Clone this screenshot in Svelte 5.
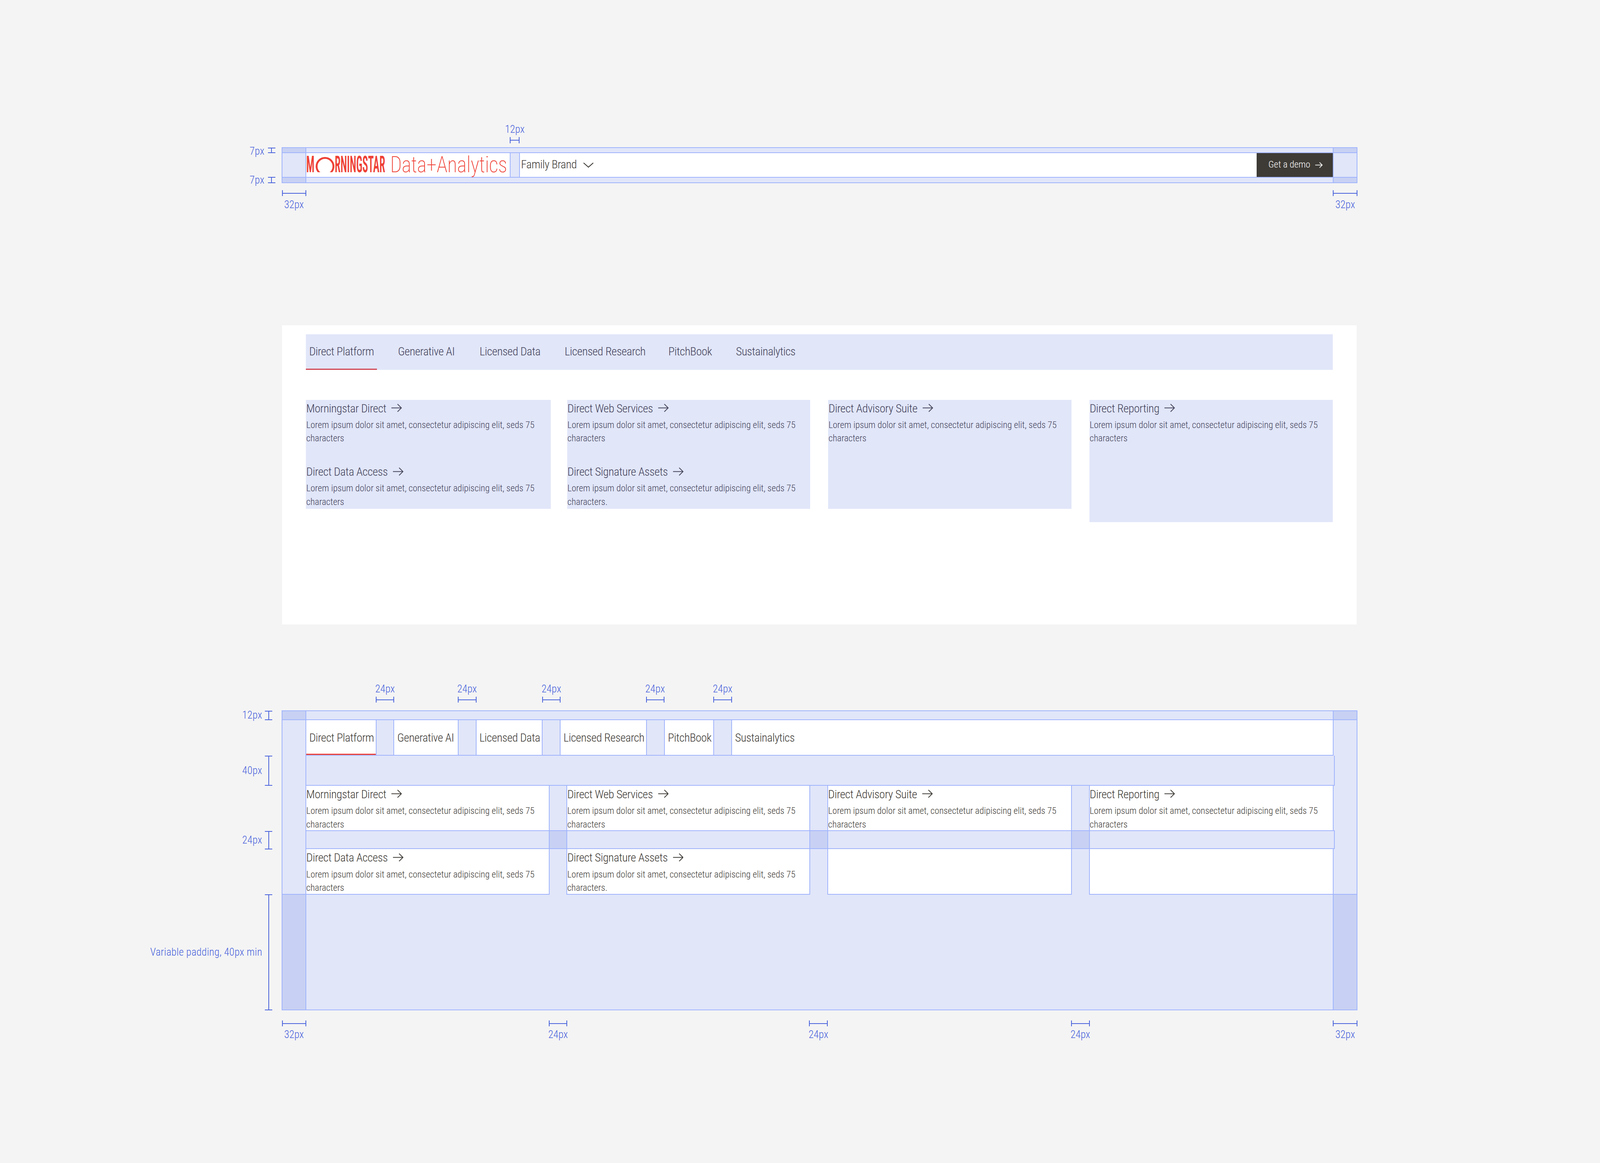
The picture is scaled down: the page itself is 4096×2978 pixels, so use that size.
<script>
  const tabs = [
    { label: 'Direct Platform', pw: 95, sw: 93, active: true },
    { label: 'Generative AI', pw: 85.5, sw: 85 },
    { label: 'Licensed Data', pw: 90, sw: 87.75 },
    { label: 'Licensed Research', pw: 115, sw: 115 },
    { label: 'PitchBook', pw: 66.5, sw: 65 },
    { label: 'Sustainalytics', pw: 90, sw: 90 }
  ];
  const lorem = 'Lorem ipsum dolor sit amet, consectetur adipiscing elit, seds 75 characters';
  const columns = [
    [{ t: 'Morningstar Direct', d: lorem }, { t: 'Direct Data Access', d: lorem }],
    [{ t: 'Direct Web Services', d: lorem }, { t: 'Direct Signature Assets', d: lorem + '.' }],
    [{ t: 'Direct Advisory Suite', d: lorem }],
    [{ t: 'Direct Reporting', d: lorem }]
  ];
  // Redline annotations, measured in reference pixels (2 per design px)
  const hbars = [
    [1367, 1393, 368], [755.5, 821, 510], [3573, 3639, 510],
    [1007, 1057, 1868], [1227, 1277, 1868], [1453, 1503, 1868], [1732, 1781, 1868], [1912, 1962, 1868],
    [755.5, 821, 2736], [1471, 1520.5, 2736], [2169, 2219, 2736], [2871, 2921, 2736], [3573, 3639, 2736]
  ];
  const vbars = [
    [718, 396, 410], [718, 474, 491],
    [710, 1906, 1931], [710, 2026, 2107], [710, 2228, 2277], [710, 2398, 2709]
  ];
  const centered = [
    ['12px', 1380, 347], ['32px', 788, 549], ['32px', 3606, 549],
    ['24px', 1032, 1847], ['24px', 1252, 1847], ['24px', 1478, 1847], ['24px', 1756, 1847], ['24px', 1937, 1847],
    ['32px', 788, 2774], ['24px', 1496, 2774], ['24px', 2194, 2774], ['24px', 2896, 2774], ['32px', 3606, 2774]
  ];
  const righted = [
    ['7px', 709, 405], ['7px', 709, 483],
    ['12px', 703, 1917], ['40px', 703, 2066], ['24px', 703, 2252], ['Variable padding, 40px min', 703, 2553]
  ];
</script>

{#snippet arrow(cls)}
  <svg class={cls} viewBox="0 0 14 11" aria-hidden="true"><path d="M0 5.5H13.4M8.2 0.4 13.4 5.5 8.2 10.6" /></svg>
{/snippet}

{#snippet item(it)}
  <div class="item">
    <div class="title">{it.t}{@render arrow('arrow')}</div>
    <p class="desc">{it.d}</p>
  </div>
{/snippet}

<div class="canvas">
  <section class="frame header-frame">
    <div class="corner bb br"></div><div class="band bb"></div><div class="corner bb bl"></div>
    <div class="band br"></div>
    <div class="header-row">
      <div class="logo">
        <span class="ms ms-m">M</span>
        <svg class="ms-o" viewBox="0 0 50 41" aria-hidden="true"><circle cx="25" cy="25" r="22.5" /></svg>
        <span class="ms ms-rest">RNINGSTAR</span>
        <span class="da">Data+Analytics</span>
      </div>
      <div class="gutter"></div>
      <div class="brand">
        <span>Family Brand</span>
        <svg class="chev" viewBox="0 0 14 7" aria-hidden="true"><path d="M.5.5 7 6.3 13.5.5" /></svg>
      </div>
      <div class="demo"><span>Get a demo</span>{@render arrow('demo-arrow')}</div>
    </div>
    <div class="band bl"></div>
    <div class="corner bt br"></div><div class="band bt"></div><div class="corner bt bl"></div>
  </section>

  <section class="panel">
    <div class="panel-tabs">
      {#each tabs as t}
        <div class="tab" class:active={t.active} style="width:{t.pw}px">{t.label}</div>
      {/each}
    </div>
    <div class="panel-cards">
      {#each columns as col, i}
        <div class="card card-{i}">
          {#each col as it}{@render item(it)}{/each}
        </div>
      {/each}
    </div>
  </section>

  <section class="frame spec-frame">
    <div class="corner bb br"></div><div class="band bb"></div><div class="corner bb bl"></div>
    <div class="band br"></div>
    <div class="spec">
      <div class="spec-tabs">
        {#each tabs as t, i}
          {#if i > 0}<div class="gutter"></div>{/if}
          <div class="tab" class:active={t.active} style="width:{t.sw}px">{t.label}</div>
        {/each}
      </div>
      <div class="gap40"></div>
      <div class="cols row-a">
        {#each columns as col, i}
          {#if i > 0}<div class="gutter"></div>{/if}
          <div>{@render item(col[0])}</div>
        {/each}
      </div>
      <div class="cols gap24">
        <div></div><div class="gutter dark"></div><div></div><div class="gutter dark"></div><div></div><div class="gutter dark"></div><div></div>
      </div>
      <div class="cols row-b">
        {#each columns as col, i}
          {#if i > 0}<div class="gutter"></div>{/if}
          <div>{#if col[1]}{@render item(col[1])}{/if}</div>
        {/each}
      </div>
    </div>
    <div class="band bl"></div>
    <div class="corner bt br"></div><div class="band bt"></div><div class="corner bt bl"></div>
  </section>

  {#each hbars as [a, b, y]}
    <div class="hbar" style="left:{a / 2}px;width:{(b - a) / 2}px;top:{y / 2}px"></div>
  {/each}
  {#each vbars as [x, a, b]}
    <div class="vbar" style="left:{x / 2}px;top:{a / 2}px;height:{(b - a) / 2}px"></div>
  {/each}
  {#each centered as [t, x, y]}
    <span class="note center" style="left:{x / 2}px;top:{y / 2}px">{t}</span>
  {/each}
  {#each righted as [t, x, y]}
    <span class="note right" style="left:{x / 2}px;top:{y / 2}px">{t}</span>
  {/each}
</div>

<style>
  :global(body) { margin: 0; background: #f4f4f4; overflow: hidden; }

  .canvas {
    zoom: 1.91;
    position: relative;
    box-sizing: border-box;
    width: 2144px;
    height: 1559px;
    padding: 197.5px 0 0 377.5px;
    font-family: Roboto, "Liberation Sans", sans-serif;
    font-stretch: 75%;
    font-weight: 300;
    color: #3e3b36;
  }

  .frame {
    display: grid;
    width: 1442px;
    grid-template-columns: 33px 1fr 33.35px;
    background: #e1e6f9;
    outline: 1.05px solid #a0b4fc;
    outline-offset: -1.05px;
  }
  .corner { background: #c8d1f3; }
  .bb { border-bottom: 1.05px solid #a0b4fc; }
  .bt { border-top: 1.05px solid #a0b4fc; }
  .br { border-right: 1.05px solid #a0b4fc; }
  .bl { border-left: 1.05px solid #a0b4fc; }
  .gutter {
    box-sizing: border-box;
    background: #e1e6f9;
    border-left: 1.05px solid #a0b4fc;
    border-right: 1.05px solid #a0b4fc;
  }
  .gutter.dark { background: #c8d1f3; }

  /* header */
  .header-frame { height: 48px; grid-template-rows: 7.6px 32.25px 8.15px; }
  .header-row { display: flex; background: #fff; min-width: 0; }
  .logo { flex: none; width: 272.85px; height: 32.25px; position: relative; color: #ee4035; }
  .ms {
    font-weight: 600;
    font-size: 31px;
    line-height: 33px;
    height: 33px;
    transform-origin: 0 0;
    white-space: nowrap;
    display: block;
    position: absolute;
    top: -1.35px;
  }
  .ms-m { left: -0.1px; transform: scaleX(0.47); }
  .ms-rest { left: 38px; transform: scaleX(0.455); }
  .ms-o {
    position: absolute;
    left: 12.35px;
    top: 5.4px;
    width: 25.2px;
    height: 20.6px;
    fill: none;
    stroke: #ee4035;
    stroke-width: 5;
  }
  .da {
    position: absolute;
    left: 112.3px;
    top: -1.15px;
    font-weight: 200;
    font-size: 30.5px;
    line-height: 33px;
    white-space: nowrap;
    transform-origin: 0 0;
    transform: scaleX(0.888);
  }
  .header-row > .gutter { flex: none; width: 13.4px; }
  .brand {
    flex: 1;
    display: flex;
    align-items: center;
    gap: 8.5px;
    padding: 0 0 1.4px 1.6px;
    font-size: 15.5px;
    letter-spacing: -0.28px;
    font-weight: 350;
    color: #3e3b36;
  }
  .chev { width: 14px; height: 7px; fill: none; stroke: #3e3b36; stroke-width: 1.1; margin-top: 2px; }
  .demo {
    box-sizing: border-box;
    width: 101.8px;
    padding: 0 0 2px 15.7px;
    display: flex;
    align-items: center;
    gap: 6.5px;
    background: #3e3b36;
    color: #fff;
    font-size: 12.6px;
  }
  .demo-arrow { width: 9.8px; height: 8px; fill: none; stroke: #fff; stroke-width: 1.3; margin-top: 2px; }

  /* laid-out panel */
  .panel {
    box-sizing: border-box;
    width: 1440.5px;
    height: 401px;
    margin: 190.5px 0 0 0.5px;
    padding: 12px 32px 0;
    background: #fff;
    color: #44435a;
  }
  .panel-tabs { display: flex; gap: 24px; height: 48px; background: #e1e6f9; }
  .tab {
    box-sizing: border-box;
    position: relative;
    flex: none;
    height: 100%;
    padding: 0 0 1.5px 4.4px;
    display: flex;
    align-items: center;
    font-size: 15.5px;
    letter-spacing: -0.28px;
    white-space: nowrap;
  }
  .tab.active::after {
    content: "";
    position: absolute;
    left: 0;
    right: 0;
    bottom: 0;
    height: 2px;
    background: #cf4450;
  }
  .panel-cards {
    display: grid;
    grid-template-columns: 326px 326px 326px 1fr;
    gap: 24px;
    margin-top: 40px;
    align-items: start;
  }
  .card { display: flex; flex-direction: column; gap: 24px; height: 146px; background: #e1e6f9; }
  .card-0 { margin-right: -2px; }
  .card-3 { height: 164px; }
  .card .item { padding-left: 0.5px; }

  .item { box-sizing: border-box; height: 61px; }
  .title { display: flex; align-items: center; gap: 7px; height: 23px; margin-bottom: 1.8px; font-size: 15.5px; letter-spacing: -0.25px; white-space: nowrap; }
  .arrow { width: 14px; height: 11px; fill: none; stroke: currentColor; stroke-width: 1; margin-top: -1px; }
  .desc { margin: 0; font-size: 12.38px; line-height: 18px; font-weight: 340; }

  /* spec */
  .spec-frame { height: 402px; margin-top: 115.5px; grid-template-rows: 12.85px 233.05px 156.1px; }
  .spec { position: relative; background: #fff; min-width: 0; }
  .spec-tabs { display: flex; height: 48px; border-bottom: 1.05px solid #a0b4fc; box-sizing: border-box; }
  .spec-tabs > .gutter { flex: 0 0 25px; }
  .spec-tabs .tab { padding: 0 0 0 4px; }
  .spec-tabs .tab.active::after { background: #ee4035; }
  .gap40 {
    box-sizing: border-box;
    height: 40px;
    margin-right: -3px;
    background: #e1e6f9;
    border-bottom: 1.05px solid #a0b4fc;
    border-right: 1.05px solid #a0b4fc;
    position: relative;
  }
  .cols {
    display: grid;
    grid-template-columns: 325.2px 24.6px 324.7px 25px 325.5px 25px 1fr;
  }
  .row-a { height: 60px; }
  .row-b { height: 60.05px; }
  .gap24 {
    box-sizing: border-box;
    height: 25px;
    margin-right: -3px;
    background: #e1e6f9;
    border-top: 1.05px solid #a0b4fc;
    border-bottom: 1.05px solid #a0b4fc;
    border-right: 1.05px solid #a0b4fc;
    position: relative;
  }

  /* redlines */
  .hbar, .vbar { position: absolute; box-sizing: border-box; }
  .hbar { height: 8px; border-left: 1.05px solid #4a63dc; border-right: 1.05px solid #4a63dc; }
  .hbar::before {
    content: "";
    position: absolute;
    left: 0;
    right: 0;
    top: 3.5px;
    height: 1.05px;
    background: #4a63dc;
  }
  .vbar { width: 10px; border-top: 1.05px solid #4a63dc; border-bottom: 1.05px solid #4a63dc; }
  .vbar::before {
    content: "";
    position: absolute;
    top: 0;
    bottom: 0;
    left: 4.5px;
    width: 1.05px;
    background: #4a63dc;
  }
  .note {
    position: absolute;
    font-size: 14px;
    line-height: 16px;
    color: #4a63dc;
    white-space: nowrap;
  }
  .center { transform: translate(-50%, -50%); }
  .right { transform: translate(-100%, -50%); letter-spacing: 0.15px; }
</style>
